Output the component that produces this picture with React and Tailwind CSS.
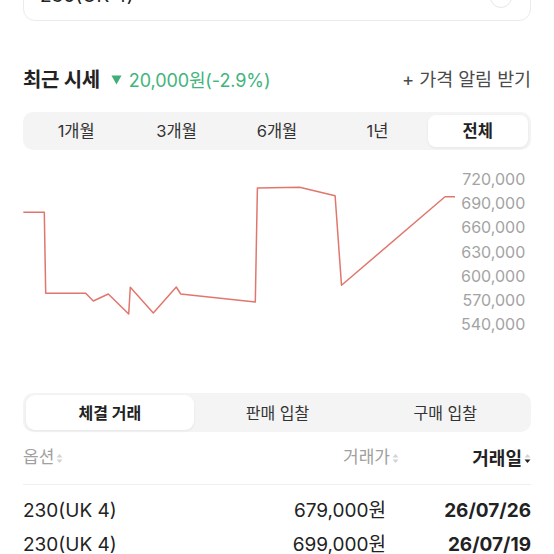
import React from "react";

const FONT = { fontFamily: 'Inter, "Noto Sans CJK KR", "Noto Sans", sans-serif' };

function SortIcon({ active }) {
  return (
    <svg width="7" height="11" viewBox="0 0 7 11" className="ml-[2px]">
      <path d="M3.5 1 L6.5 4.6 L0.5 4.6 Z" fill="#d4d4d4" />
      <path d="M3.5 10 L6.5 6.4 L0.5 6.4 Z" fill={active ? "#222222" : "#d4d4d4"} />
    </svg>
  );
}

const points = [
  [0.3, 62.3],
  [21.3, 62.3],
  [22.7, 143.3],
  [62.7, 143.3],
  [70.3, 151],
  [85.3, 144],
  [105.7, 164],
  [107.3, 137.3],
  [130.3, 163],
  [153.3, 137],
  [157.7, 144],
  [232.3, 152],
  [234.4, 38],
  [276.6, 37.3],
  [312.1, 45.7],
  [318.5, 135.3],
  [422, 46.7],
  [432, 46.7],
];

export default function App() {
  const periods = ["1개월", "3개월", "6개월", "1년", "전체"];
  const labels = ["720,000", "690,000", "660,000", "630,000", "600,000", "570,000", "540,000"];
  const rows = [
    ["230(UK 4)", "679,000원", "26/07/26"],
    ["230(UK 4)", "699,000원", "26/07/19"],
  ];
  return (
    <div className="w-[554px] h-[554px] overflow-hidden bg-white text-[#222]" style={FONT}>
      <div className="pl-[23px] pr-[23px]">
        {/* top option card */}
        <div className="-mt-[33px] h-[54px] pt-[5px] rounded-[12px] border border-[#ebebeb] flex items-center justify-between pl-[16px] pr-[18px]">
          <span className="text-[19px] text-[#222]">230(UK 4)</span>
          <span className="w-[22px] h-[22px] rounded-full border border-[#e6e6e6]"></span>
        </div>

        {/* title row */}
        <div className="mt-[45px] h-[28px] flex items-center justify-between">
          <div className="flex items-center">
            <span className="text-[20px] font-bold text-[#222] tracking-[-0.3px]">최근 시세</span>
            <svg width="11" height="10" viewBox="0 0 11 10" className="ml-[11px] mr-[7px]">
              <path d="M0.5 0.5 L10.5 0.5 L5.5 9.5 Z" fill="#3fae78" />
            </svg>
            <span className="text-[18px] text-[#41b47d] tracking-[-0.1px]">20,000원(-2.9%)</span>
          </div>
          <span className="text-[18.5px] text-[#4b4b4b] tracking-[-0.1px]">+ 가격 알림 받기</span>
        </div>

        {/* period tabs */}
        <div className="mt-[18px] h-[38px] rounded-[10px] bg-[#f4f4f4] p-[3px] grid grid-cols-5">
          {periods.map((p, i) => (
            <div
              key={p}
              className={
                i === 4
                  ? "flex items-center justify-center rounded-[8px] bg-white shadow-[0_1px_3px_rgba(0,0,0,0.06)] text-[16.5px] font-bold text-[#222]"
                  : "flex items-center justify-center text-[16.5px] text-[#333]"
              }
            >
              {p}
            </div>
          ))}
        </div>

        {/* chart */}
        <div className="h-[200px] flex">
          <svg width="438" height="200" viewBox="0 0 438 200" className="shrink-0">
            <polyline
              points={points.map((p) => p.join(",")).join(" ")}
              fill="none"
              stroke="#e0776e"
              strokeWidth="1.5"
              strokeLinejoin="round"
            />
          </svg>
          <div className="flex-1 pt-[17px] pr-[7px] flex flex-col items-end">
            {labels.map((l) => (
              <div key={l} className="h-[24.17px] flex items-center text-[16px] text-[#a3a3a3]">
                {l}
              </div>
            ))}
          </div>
        </div>

        {/* trade tabs */}
        <div className="mt-[43px] h-[39px] rounded-[10px] bg-[#f4f4f4] p-[2px] pl-[3px] grid grid-cols-3">
          <div className="flex items-center justify-center rounded-[9px] bg-white shadow-[0_1px_3px_rgba(0,0,0,0.06)] text-[16px] font-bold text-[#222]">
            체결 거래
          </div>
          <div className="flex items-center justify-center text-[16px] text-[#333]">판매 입찰</div>
          <div className="flex items-center justify-center text-[16px] text-[#333]">구매 입찰</div>
        </div>

        {/* header */}
        <div className="mt-[12px] h-[28px] flex items-center">
          <div className="flex-1 flex items-center text-[17px] text-[#a0a0a0]">
            옵션
            <SortIcon />
          </div>
          <div className="w-[145px] flex items-center justify-end text-[17px] text-[#a0a0a0]">
            거래가
            <SortIcon />
          </div>
          <div className="w-[132px] flex items-center justify-end text-[18px] font-bold text-[#222]">
            거래일
            <SortIcon active />
          </div>
        </div>

        <div className="mt-[12px] h-px bg-[#efefef]"></div>

        <div className="mt-[9px]">
          {rows.map((r, i) => (
            <div key={i} className="h-[34px] flex items-center text-[19px]">
              <div className="flex-1 text-[#222]">{r[0]}</div>
              <div className="w-[145px] text-right pr-[13px] text-[#222]">{r[1]}</div>
              <div className="w-[132px] text-right font-bold text-[#222]">{r[2]}</div>
            </div>
          ))}
        </div>
      </div>
    </div>
  );
}
